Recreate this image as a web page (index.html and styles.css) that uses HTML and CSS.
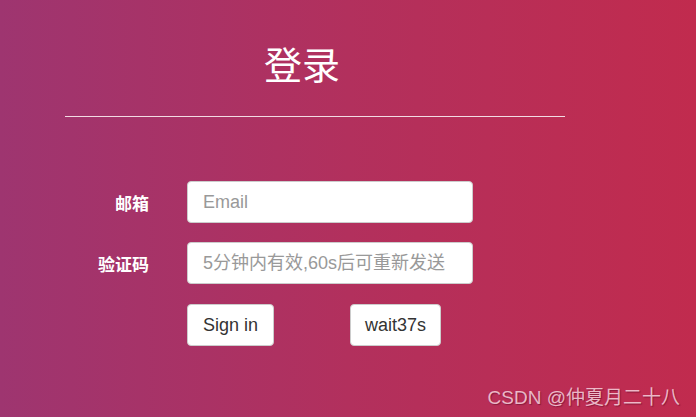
FILE: index.html
```html
<!DOCTYPE html>
<html lang="zh">
<head>
<meta charset="utf-8">
<title>登录</title>
<link rel="stylesheet" href="styles.css">
</head>
<body>
<div class="page">
  <h1 class="title">登录</h1>
  <hr class="rule">
  <form class="form">
    <label class="label" for="email">邮箱</label>
    <input class="field" id="email" type="text" placeholder="Email">
    <label class="label" for="code">验证码</label>
    <input class="field" id="code" type="text" placeholder="5分钟内有效,60s后可重新发送">
    <div class="actions">
      <button type="button" class="btn">Sign in</button>
      <button type="button" class="btn btn-wait">wait37s</button>
    </div>
  </form>
  <div class="watermark">CSDN @仲夏月二十八</div>
</div>
</body>
</html>
```
FILE: styles.css
```css
html, body {
  margin: 0;
  padding: 0;
}
body {
  width: 696px;
  height: 417px;
  overflow: hidden;
  font-family: "Liberation Sans", "Noto Sans CJK SC", sans-serif;
}
.page {
  position: relative;
  height: 417px;
  background: linear-gradient(to right, #9e3570, #b2305d 50%, #c12b4e);
  padding-top: 1px;
  box-sizing: border-box;
}
.title {
  margin: 38px 0 0 264px;
  font-family: "Noto Sans CJK SC", sans-serif;
  font-weight: normal;
  font-size: 38px;
  line-height: 48px;
  color: #fff;
}
.rule {
  margin: 29px 0 0 65px;
  width: 500px;
  border: 0;
  border-top: 1px solid #f2dbe3;
  height: 0;
}
.form {
  display: grid;
  grid-template-columns: 84px 286px;
  column-gap: 38px;
  row-gap: 19px;
  margin: 64px 0 0 65px;
  align-items: center;
}
.label {
  text-align: right;
  color: #fff;
  font-family: "Noto Sans CJK SC", sans-serif;
  font-weight: bold;
  font-size: 17px;
}
.field {
  height: 42px;
  box-sizing: border-box;
  border: 1px solid #ccc;
  border-radius: 4px;
  background: #fff;
  padding: 0 15px;
  font-family: "Liberation Sans", "Noto Sans CJK SC", sans-serif;
  font-size: 18px;
  color: #555;
  outline: none;
}
.field::placeholder {
  color: #999;
}
.actions {
  grid-column: 2;
  display: flex;
  gap: 76px;
  margin-top: 1px;
}
.btn {
  height: 42px;
  box-sizing: border-box;
  padding: 0 15px;
  border: 1px solid #ccc;
  border-radius: 4px;
  background: #fff;
  color: #333;
  font-family: "Liberation Sans", sans-serif;
  font-size: 18px;
}
.btn-wait {
  padding: 0 14px;
}
.watermark {
  position: absolute;
  right: 16px;
  bottom: 8px;
  font-family: "Liberation Sans", "Noto Sans CJK SC", sans-serif;
  font-size: 19px;
  color: rgba(255, 225, 235, 0.78);
  text-shadow: 1px 1px 1px rgba(80, 0, 30, 0.45);
}
```
